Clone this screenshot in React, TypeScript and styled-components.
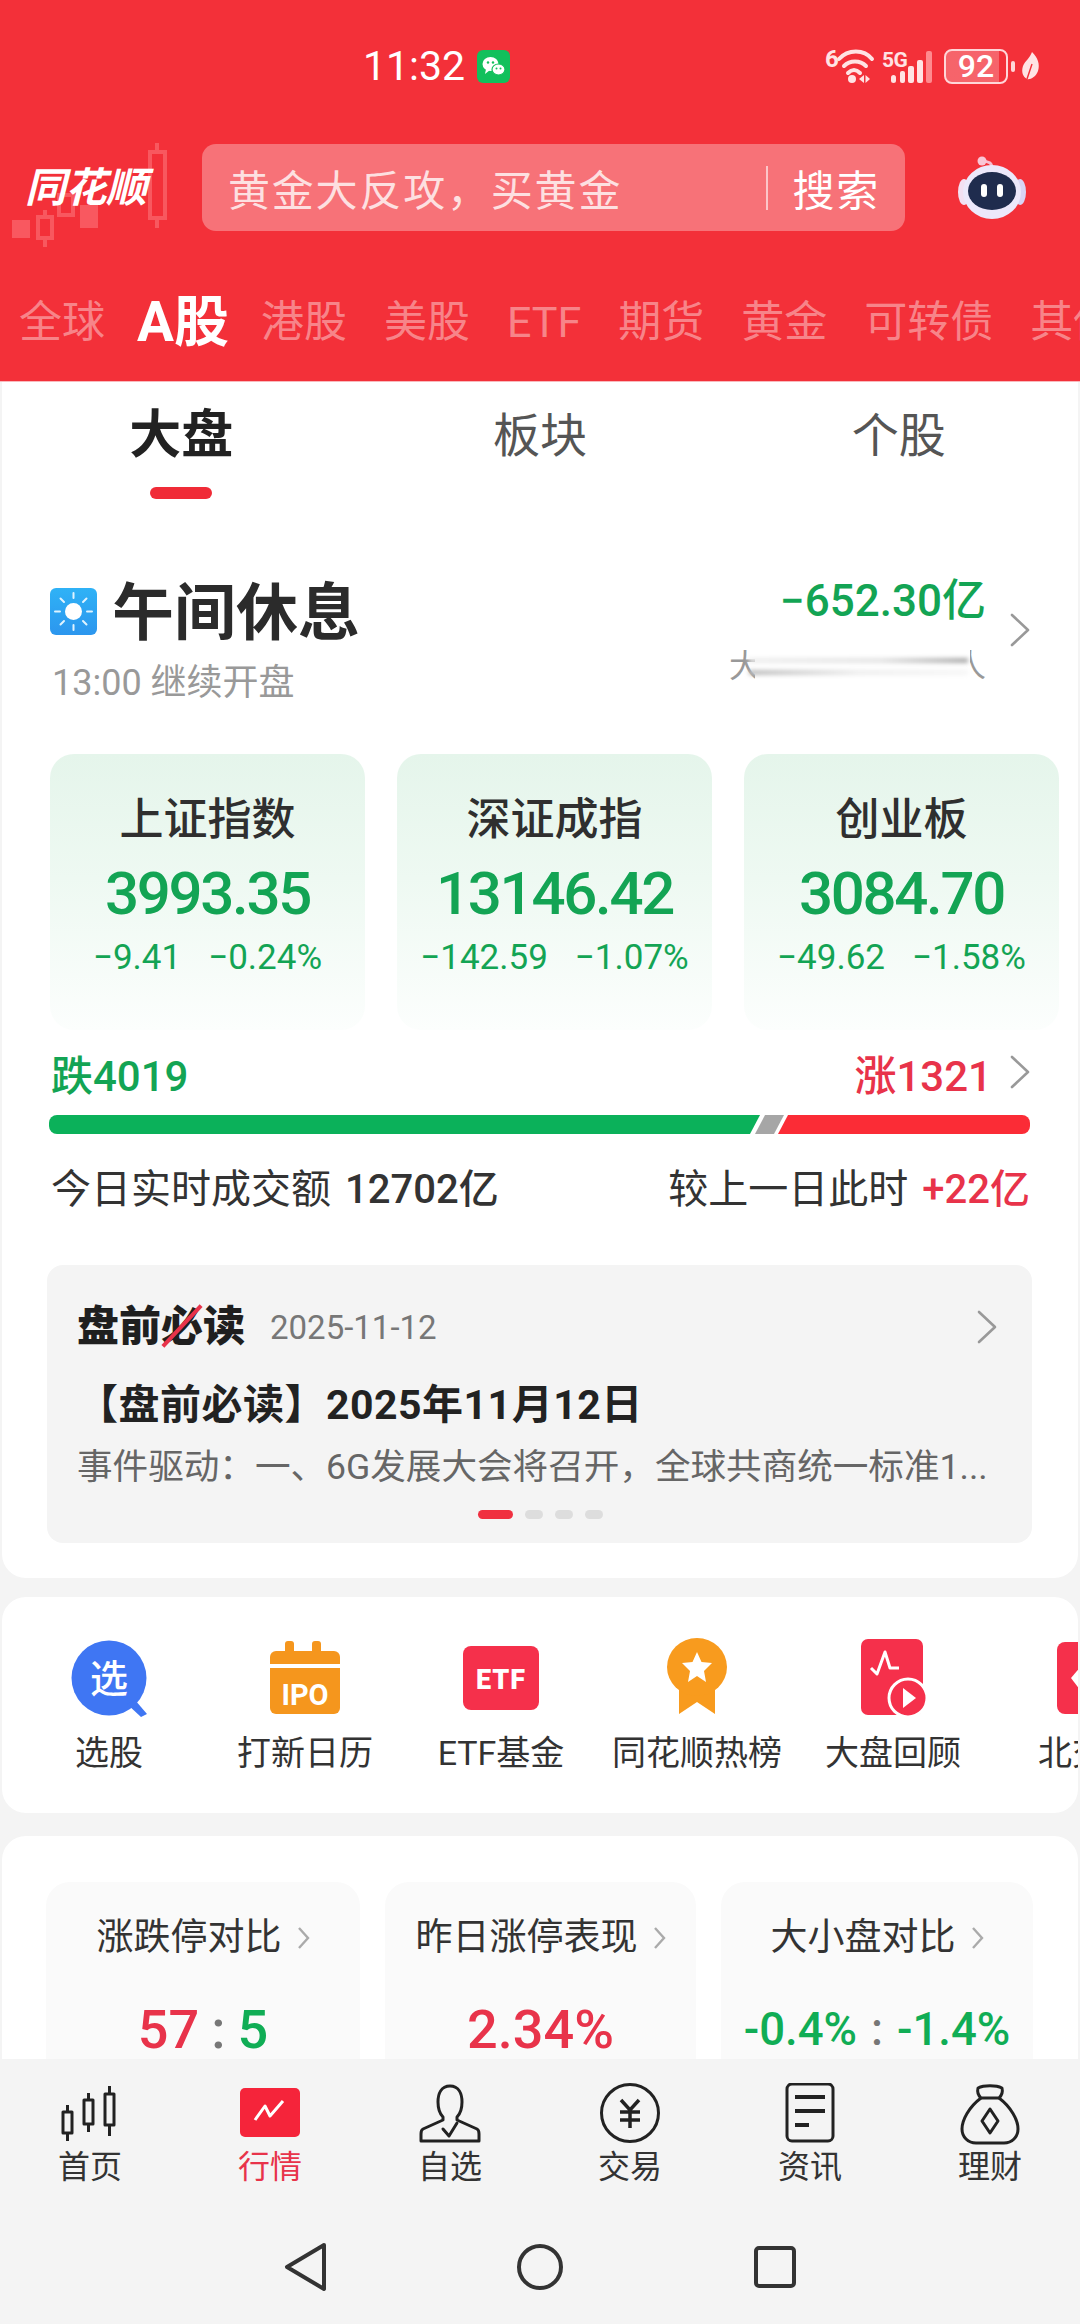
import React from "react";
import styled, { createGlobalStyle } from "styled-components";

const Global = createGlobalStyle`
  html, body { margin: 0; padding: 0; background: #f4f4f4; }
  * { box-sizing: border-box; }
  body { font-family: Roboto, "Noto Sans CJK SC", sans-serif; }
`;

const GREEN = "#13a454";
const RED = "#e8334a";

const Page = styled.div`
  width: 1080px; height: 2324px; display: flex; flex-direction: column; overflow: hidden; background: #f4f4f4;
`;
const Header = styled.header`
  height: 382px; background: #f33039; flex: none; display: flex; flex-direction: column; border-bottom: 1px solid #f9b9bd;
`;
const StatusBar = styled.div`
  margin-top: 46px; height: 40px; padding: 0 40px 0 363px; display: flex; align-items: center; justify-content: space-between; color: #fff;
`;
const TimeGroup = styled.div`display: flex; align-items: center; gap: 9px;`;
const Time = styled.span`font-size: 41px; line-height: 40px; width: 105px; white-space: nowrap;`;
const StatusIcons = styled.div`display: flex; align-items: center;`;
const Battery = styled.div`
  width: 64px; height: 35px; margin-left: 10px; border: 2.5px solid #ffd6d8; border-radius: 8px; color: #fff;
  font-size: 32px; font-weight: 500; line-height: 30px; text-align: center;
  background: linear-gradient(90deg, rgba(255,255,255,.25) 88%, transparent 88%);
`;
const BatteryNub = styled.i`display: block; width: 4px; height: 11px; margin: 0 6px 0 3px; background: #ffd6d8; border-radius: 2px;`;

const SearchRow = styled.div`
  margin-top: 58px; height: 87px; display: flex; align-items: center; padding-left: 202px; position: relative;
`;
const LogoMark = styled.svg`position: absolute; left: 8px; top: -4px;`;
const LogoText = styled.span`
  position: absolute; left: 25px; top: 19px; font-size: 41px; line-height: 50px; font-weight: 700; font-style: italic; color: #fff; letter-spacing: -.5px; white-space: nowrap;
`;
const SearchBox = styled.div`
  width: 703px; height: 87px; border-radius: 14px; background: rgba(255,255,255,.32); display: flex; align-items: center; padding: 0 25px 0 26px; color: #fff;
  font-size: 42px; letter-spacing: 1.8px;
`;
const Hint = styled.span`flex: 1; color: rgba(255,255,255,.78); white-space: nowrap;`;
const SearchDivider = styled.i`display: block; width: 2px; height: 44px; background: rgba(255,255,255,.6); margin-right: 24px;`;
const Robot = styled.svg`margin-left: 53px; flex: none;`;

const MarketTabs = styled.nav`
  margin-top: 61px; height: 60px; padding-left: 19px; display: flex; align-items: center; gap: 37px; overflow: hidden; white-space: nowrap;
`;
const MarketTab = styled.span<{ $on?: boolean }>`
  flex: none; font-size: ${p => (p.$on ? "55px" : "43px")}; font-weight: ${p => (p.$on ? 700 : 400)}; color: ${p => (p.$on ? "#fff" : "rgba(255,255,255,.42)")}; line-height: 60px;
  margin: ${p => (p.$on ? "0 -5px" : "0")};
`;

const Body = styled.main`flex: 1; min-height: 0; overflow: hidden;`;
const Section = styled.section<{ $first?: boolean }>`
  background: #fff; margin: 0 2px; border-radius: ${p => (p.$first ? "0 0 24px 24px" : "24px")};
`;
const Overview = styled(Section)`padding-bottom: 35px;`;
const SubTabs = styled.div`display: grid; grid-template-columns: repeat(3, 1fr); height: 128px;`;
const SubTab = styled.div<{ $on?: boolean }>`
  display: flex; flex-direction: column; align-items: center; padding-top: 24px;
  font-size: ${p => (p.$on ? "52px" : "47px")}; font-weight: ${p => (p.$on ? 700 : 400)}; line-height: 60px; color: ${p => (p.$on ? "#222" : "#555")};
`;
const SubLine = styled.i`display: block; width: 62px; height: 12px; border-radius: 6px; background: #f02b37; margin-top: 21px;`;

const MarketRow = styled.div`margin-top: 59px; padding: 0 48px; display: flex; justify-content: space-between;`;
const TitleLine = styled.div`display: flex; align-items: center; gap: 15px; height: 84px;`;
const SunBadge = styled.svg`flex: none;`;
const BreakTitle = styled.h1`margin: 0; position: relative; top: 3px; font-size: 62px; line-height: 84px; font-weight: 700; color: #2b2b2b;`;
const BreakSub = styled.div`margin: 10px 0 0 2px; font-size: 36px; line-height: 40px; color: #999;`;
const FlowWrap = styled.div`display: flex; align-items: flex-start;`;
const FlowCol = styled.div`display: flex; flex-direction: column; align-items: flex-end; padding-top: 7px;`;
const FlowValue = styled.div`font-size: 44px; line-height: 50px; font-weight: 500; color: ${GREEN}; white-space: nowrap;`;
const Smear = styled.div`
  position: relative; width: 257px; height: 33px; margin-top: 24px; display: flex; justify-content: space-between; align-items: center; color: #999; font-size: 32px; line-height: 33px;
`;
const SmearMask = styled.i`position: absolute; left: 26px; right: 16px; top: 0; bottom: 0; background: #fff;`;
const SmearLine = styled.i<{ $low?: boolean }>`
  position: absolute; left: 20px; right: 18px; top: ${p => (p.$low ? "20px" : "8px")}; height: 5px; filter: blur(2px);
  background: ${p => (p.$low
    ? "linear-gradient(90deg,#bbb,#eee 50%,#f6f6f6)"
    : "linear-gradient(90deg,#eee,#e4e4e4 60%,#aaa)")};
`;
const Chevron = styled.svg<{ $top?: number; $gap?: number }>`flex: none; margin-left: ${p => p.$gap ?? 24}px; margin-top: ${p => p.$top ?? 0}px;`;

const IndexGrid = styled.div`display: grid; grid-template-columns: repeat(3, 315px); column-gap: 32px; padding-left: 48px; margin-top: 51px;`;
const IndexCard = styled.div`
  height: 276px; border-radius: 24px; padding-top: 42px; display: flex; flex-direction: column; align-items: center;
  background: linear-gradient(180deg, #e5f5eb 0%, #eef9f2 45%, #fcfefd 100%);
`;
const IndexName = styled.div`font-size: 44px; line-height: 48px; font-weight: 500; color: #2f2f2f;`;
const IndexValue = styled.div`margin-top: 15px; font-size: 60px; line-height: 70px; font-weight: 500; letter-spacing: -2.3px; color: ${GREEN};`;
const IndexDelta = styled.div`margin-top: 9px; display: flex; gap: 27px; font-size: 35px; line-height: 40px; color: ${GREEN}; white-space: nowrap;`;

const BreadthRow = styled.div`margin-top: 18px; padding: 0 48px 0 49px; display: flex; align-items: center; height: 48px; font-size: 42px; font-weight: 500;`;
const Fall = styled.span`color: ${GREEN}; flex: 1;`;
const Rise = styled.span`color: ${RED};`;
const Bar = styled.div`margin: 19px 48px 0 47px; height: 19px; display: flex;`;
const BarGreen = styled.i`
  display: block; width: 711px; border-radius: 8px 0 0 8px; background: #0bb15a;
  clip-path: polygon(0 0, 100% 0, calc(100% - 10px) 100%, 0 100%);
`;
const BarGrey = styled.i`
  display: block; width: 29px; margin-left: -5px; background: #a6a6a6;
  clip-path: polygon(10px 0, 100% 0, calc(100% - 10px) 100%, 0 100%);
`;
const BarRed = styled.i`
  display: block; flex: 1; margin-left: -6px; border-radius: 0 8px 8px 0; background: #fb2c36;
  clip-path: polygon(10px 0, 100% 0, 100% 100%, 0 100%);
`;
const VolumeRow = styled.div`margin-top: 31px; padding: 0 48px 0 49px; display: flex; justify-content: space-between; font-size: 40px; line-height: 50px; color: #333; white-space: nowrap;`;
const VolValue = styled.b<{ $red?: boolean }>`font-weight: 500; margin-left: 14px; color: ${p => (p.$red ? RED : "#333")};`;

const BriefCard = styled.div`margin: 50px 46px 0 45px; height: 278px; border-radius: 16px; background: #f4f4f4; padding: 37px 35px 0 30px;`;
const BriefHead = styled.div`display: flex; align-items: center; height: 50px;`;
const BriefBrand = styled.div`position: relative; font-size: 42px; line-height: 50px; font-weight: 900; color: #1f1f1f;`;
const BriefSlash = styled.i`position: absolute; left: 103px; top: -4px; width: 4px; height: 56px; background: ${RED}; transform: rotate(43deg); display: block;`;
const BriefDate = styled.span`margin-left: 25px; flex: 1; font-size: 33px; color: #777;`;
const BriefTitle = styled.div`margin-top: 28px; font-size: 41px; line-height: 50px; font-weight: 700; letter-spacing: .5px; color: #222; white-space: nowrap;`;
const BriefDesc = styled.div`margin-top: 15px; font-size: 35.6px; line-height: 44px; color: #666; white-space: nowrap;`;
const Dots = styled.div`margin-top: 21px; display: flex; justify-content: center; gap: 12px; padding-left: 6px;`;
const Dot = styled.i<{ $on?: boolean }>`display: block; height: 9px; width: ${p => (p.$on ? "35px" : "18px")}; border-radius: 5px; background: ${p => (p.$on ? "#f03040" : "#ddd")};`;

const ToolSection = styled(Section)`margin-top: 19px; height: 216px; padding: 41px 0 0 9px; display: flex; overflow: hidden; border-radius: 24px;`;
const Tool = styled.div`flex: none; width: 196px; display: flex; flex-direction: column; align-items: center;`;
const ToolIcon = styled.svg`display: block; flex: none;`;
const ToolLabel = styled.div`margin-top: 13px; font-size: 34px; line-height: 44px; color: #333; white-space: nowrap;`;

const StatSection = styled(Section)`margin-top: 23px; padding: 46px 46px 0 44px; height: 400px; display: grid; grid-template-columns: 314px 311px 312px; column-gap: 25px;`;
const StatCard = styled.div`background: #fafafa; border-radius: 24px; padding-top: 32px; display: flex; flex-direction: column; align-items: center;`;
const StatName = styled.div`display: flex; align-items: center; font-size: 37px; line-height: 48px; color: #333; white-space: nowrap;`;
const StatChevron = styled.svg`margin-left: 15px;`;
const StatValue = styled.div<{ $small?: boolean }>`
  margin-top: 33px; display: flex; align-items: center; gap: ${p => (p.$small ? "14px" : "12px")}; font-size: ${p => (p.$small ? "45.5px" : "54px")}; line-height: 70px; font-weight: 500; white-space: nowrap;
`;
const Tone = styled.span<{ $c: "r" | "g" | "m" }>`color: ${p => (p.$c === "r" ? RED : p.$c === "g" ? "#10ad55" : "#777")};`;

const BottomNav = styled.footer`flex: none; height: 265px; background: #f4f4f4; padding-top: 24px;`;
const NavTabs = styled.div`display: grid; grid-template-columns: repeat(6, 180px);`;
const NavTab = styled.div<{ $on?: boolean }>`display: flex; flex-direction: column; align-items: center; color: ${p => (p.$on ? RED : "#333")}; font-size: 32px; line-height: 40px;`;
const NavLabel = styled.span`margin-top: 2px;`;
const SysButtons = styled.div`margin-top: 34px; height: 92px; display: flex; justify-content: center; align-items: center; gap: 185px;`;

const Chev = ({ top, gap }: { top?: number; gap?: number }) => (
  <Chevron $top={top} $gap={gap} width={20} height={34} viewBox="0 0 20 34" fill="none" stroke="#999" strokeWidth="2.6" strokeLinecap="round" strokeLinejoin="round">
    <path d="M2 2 L18 17 L2 32" />
  </Chevron>
);

const SmallChev = () => (
  <StatChevron width="13" height="24" viewBox="0 0 13 24" fill="none" stroke="#aaa" strokeWidth="2.400">
    <path d="M2 2 L11 12 L2 22" />
  </StatChevron>
);

const indices = [
  { n: "上证指数", v: "3993.35", a: "−9.41", b: "−0.24%" },
  { n: "深证成指", v: "13146.42", a: "−142.59", b: "−1.07%" },
  { n: "创业板", v: "3084.70", a: "−49.62", b: "−1.58%" },
];

const App = () => (
  <Page>
    <Global />
    <Header>
      <StatusBar>
        <TimeGroup>
          <Time>11:32</Time>
          <svg width="33" height="33" viewBox="0 0 33 33">
            <rect width="33" height="33" rx="6" fill="#12c05c" />
            <ellipse cx="13.5" cy="14" rx="8" ry="7" fill="#fff" />
            <path d="M9 19 L8 24 L13 20Z" fill="#fff" />
            <ellipse cx="21.5" cy="19.5" rx="6.5" ry="5.5" fill="#fff" stroke="#12c05c" strokeWidth="1.2" />
            <circle cx="11" cy="12.5" r="1.2" fill="#12c05c" />
            <circle cx="16" cy="12.5" r="1.2" fill="#12c05c" />
            <circle cx="19.5" cy="18.5" r="1" fill="#12c05c" />
            <circle cx="23.5" cy="18.5" r="1" fill="#12c05c" />
          </svg>
        </TimeGroup>
        <StatusIcons>
          <svg width="110" height="38" viewBox="0 0 110 38" fill="none">
            <text x="1" y="20" fontSize="24" fontWeight="700" fontFamily="Roboto, sans-serif" fill="#ffe3e4">6</text>
            <g stroke="#ffe3e4" strokeWidth="4" strokeLinecap="round">
              <path d="M15 12 C24 2 40 2 48 12" />
              <path d="M20 19 C26 13 36 13 42 19" />
              <path d="M24 26 C28 22 32 22 36 26" />
            </g>
            <circle cx="28" cy="32" r="4" fill="#ffe3e4" />
            <path d="M35 32 L40 28 V36Z M41.500 28 L46 32 L41.500 36Z" fill="#ffe3e4" />
            <text x="58" y="20" fontSize="21" fontWeight="700" letterSpacing="-.5" fontFamily="Roboto, sans-serif" fill="#ffe3e4">5G</text>
            <g fill="#ffe3e4">
              <rect x="67" y="28" width="5" height="8" rx="2.500" />
              <rect x="76" y="24" width="5" height="12" rx="2" />
              <rect x="84" y="19" width="6" height="17" rx="2" />
              <rect x="93" y="13" width="6" height="23" rx="2" />
            </g>
            <rect x="102" y="4" width="6" height="32" rx="2" fill="#ff8a8e" />
          </svg>
          <Battery>92</Battery>
          <BatteryNub />
          <svg width="19" height="28" viewBox="0 0 19 28">
            <path d="M11 0 C17 6 19 12 17 19 C15 25 9 28 6 27 C2 25 0 20 2 14 C4 9 9 6 11 0Z" fill="#ffe3e4" />
            <path d="M6 27 L11 12" stroke="#f33039" strokeWidth="1.400" />
          </svg>
        </StatusIcons>
      </StatusBar>
      <SearchRow>
        <LogoMark width="165" height="110" viewBox="8 140 165 110" fill="none">
          <g stroke="#fb6a70" strokeWidth="4" opacity=".7">
            <rect x="150" y="152" width="15" height="66" />
            <path d="M157 143 V152 M157 218 V228" />
            <rect x="59" y="195" width="14" height="20" />
            <rect x="38" y="217" width="14" height="21" />
            <path d="M45 210 V217 M45 238 V247" />
          </g>
          <rect x="80" y="205" width="18" height="23" fill="#fb6a70" opacity=".7" />
          <rect x="12" y="220" width="18" height="18" fill="#fb6a70" opacity=".7" />
        </LogoMark>
        <LogoText>同花顺</LogoText>
        <SearchBox>
          <Hint>黄金大反攻，买黄金</Hint>
          <SearchDivider />
          <span>搜索</span>
        </SearchBox>
        <Robot width="68" height="64" viewBox="0 0 68 64">
          <path d="M34 12 C34 6 30 6 26 5" stroke="#f7bcd0" strokeWidth="3" fill="none" />
          <circle cx="24" cy="5" r="4.500" fill="#f9c6d6" />
          <ellipse cx="6" cy="36" rx="6" ry="13" fill="#f3e0f2" />
          <ellipse cx="62" cy="36" rx="6" ry="13" fill="#d9d4f5" />
          <ellipse cx="34" cy="36" rx="29" ry="27" fill="#ece8fb" />
          <ellipse cx="34" cy="35" rx="24" ry="19" fill="#1f2c4e" />
          <rect x="23" y="28" width="6" height="13" rx="3" fill="#fff" />
          <rect x="39" y="28" width="6" height="13" rx="3" fill="#fff" />
        </Robot>
      </SearchRow>
      <MarketTabs>
        <MarketTab>全球</MarketTab>
        <MarketTab $on>A股</MarketTab>
        <MarketTab>港股</MarketTab>
        <MarketTab>美股</MarketTab>
        <MarketTab>ETF</MarketTab>
        <MarketTab>期货</MarketTab>
        <MarketTab>黄金</MarketTab>
        <MarketTab>可转债</MarketTab>
        <MarketTab>其他</MarketTab>
      </MarketTabs>
    </Header>

    <Body>
      <Overview $first>
        <SubTabs>
          <SubTab $on>大盘<SubLine /></SubTab>
          <SubTab>板块</SubTab>
          <SubTab>个股</SubTab>
        </SubTabs>
        <MarketRow>
          <div>
            <TitleLine>
              <SunBadge width="47" height="47" viewBox="0 0 47 47">
                <defs>
                  <linearGradient id="sky" x1="0" y1="0" x2="0" y2="1">
                    <stop offset="0" stopColor="#2fb2f6" />
                    <stop offset="1" stopColor="#2c96ee" />
                  </linearGradient>
                </defs>
                <rect width="47" height="47" rx="6" fill="url(#sky)" />
                <circle cx="23.500" cy="23.500" r="8.500" fill="#fff" />
                <g stroke="#dff3ff" strokeWidth="2" strokeLinecap="round">
                  <path d="M23.500 5 V10 M23.500 37 V42 M5 23.500 H10 M37 23.500 H42 M10.500 10.500 L14 14 M33 33 L36.500 36.500 M36.500 10.500 L33 14 M14 33 L10.500 36.500" />
                </g>
              </SunBadge>
              <BreakTitle>午间休息</BreakTitle>
            </TitleLine>
            <BreakSub>13:00 继续开盘</BreakSub>
          </div>
          <FlowWrap>
            <FlowCol>
              <FlowValue>−652.30亿</FlowValue>
              <Smear>
                <span>大</span>
                <span>人</span>
                <SmearMask />
                <SmearLine />
                <SmearLine $low />
              </Smear>
            </FlowCol>
            <Chev top={44} />
          </FlowWrap>
        </MarketRow>

        <IndexGrid>
          {indices.map(i => (
            <IndexCard key={i.n}>
              <IndexName>{i.n}</IndexName>
              <IndexValue>{i.v}</IndexValue>
              <IndexDelta>
                <span>{i.a}</span>
                <span>{i.b}</span>
              </IndexDelta>
            </IndexCard>
          ))}
        </IndexGrid>

        <BreadthRow>
          <Fall>跌4019</Fall>
          <Rise>涨1321</Rise>
          <Chev gap={18} />
        </BreadthRow>
        <Bar>
          <BarGreen />
          <BarGrey />
          <BarRed />
        </Bar>
        <VolumeRow>
          <span>今日实时成交额<VolValue>12702亿</VolValue></span>
          <span>较上一日此时<VolValue $red>+22亿</VolValue></span>
        </VolumeRow>

        <BriefCard>
          <BriefHead>
            <BriefBrand>盘前必读<BriefSlash /></BriefBrand>
            <BriefDate>2025-11-12</BriefDate>
            <Chev />
          </BriefHead>
          <BriefTitle>【盘前必读】2025年11月12日</BriefTitle>
          <BriefDesc>事件驱动：一、6G发展大会将召开，全球共商统一标准1...</BriefDesc>
          <Dots>
            <Dot $on />
            <Dot />
            <Dot />
            <Dot />
          </Dots>
        </BriefCard>
      </Overview>

      <ToolSection>
        <Tool>
          <ToolIcon width="80" height="80" viewBox="0 0 80 80">
            <circle cx="40" cy="40" r="37.500" fill="#3f76f3" />
            <path d="M58 66 L66 62 L78 76 L72 79Z" fill="#3f76f3" />
            <text x="40" y="54" textAnchor="middle" fontSize="38" fontWeight="500" fill="#fff" fontFamily="'Noto Sans CJK SC', sans-serif">选</text>
          </ToolIcon>
          <ToolLabel>选股</ToolLabel>
        </Tool>
        <Tool>
          <ToolIcon width="80" height="80" viewBox="0 0 80 80">
            <rect x="20" y="3" width="9" height="14" rx="3" fill="#f5961d" />
            <rect x="47" y="3" width="9" height="14" rx="3" fill="#f5961d" />
            <path d="M5 19 a6 6 0 0 1 6 -6 H69 a6 6 0 0 1 6 6 V26 H5Z" fill="#f5961d" />
            <path d="M5 30 H75 V70 a6 6 0 0 1 -6 6 H11 a6 6 0 0 1 -6 -6Z" fill="#f5961d" />
            <text x="40" y="67" textAnchor="middle" fontSize="29" fontWeight="700" fill="#fff" fontFamily="Roboto, sans-serif">IPO</text>
          </ToolIcon>
          <ToolLabel>打新日历</ToolLabel>
        </Tool>
        <Tool>
          <ToolIcon width="80" height="80" viewBox="0 0 80 80">
            <rect x="2" y="8" width="76" height="64" rx="8" fill="#f5304b" />
            <text x="40" y="51" textAnchor="middle" fontSize="27" fontWeight="900" letterSpacing="1" fill="#fff" fontFamily="Roboto, sans-serif">ETF</text>
          </ToolIcon>
          <ToolLabel>ETF基金</ToolLabel>
        </Tool>
        <Tool>
          <ToolIcon width="80" height="80" viewBox="0 0 80 80">
            <path d="M22 50 H58 V76 L40 64 L22 76Z" fill="#f89b1e" />
            <ellipse cx="40" cy="29" rx="30" ry="29" fill="#f89b1e" />
            <path d="M40 14 L44.500 24 L55 25 L47 33 L49 44 L40 38 L31 44 L33 33 L25 25 L35.500 24Z" fill="#fff" />
          </ToolIcon>
          <ToolLabel>同花顺热榜</ToolLabel>
        </Tool>
        <Tool>
          <ToolIcon width="80" height="80" viewBox="0 0 80 80" fill="none">
            <rect x="8" y="1" width="62" height="76" rx="7" fill="#f5304b" />
            <path d="M18 30 L24 36 L32 14 L37 30 H46" stroke="#fff" strokeWidth="3" strokeLinejoin="round" />
            <circle cx="55" cy="60" r="19" fill="#f5304b" stroke="#fff" strokeWidth="3" />
            <path d="M50 50 L63 60 L50 70Z" fill="#fff" />
          </ToolIcon>
          <ToolLabel>大盘回顾</ToolLabel>
        </Tool>
        <Tool>
          <ToolIcon width="80" height="80" viewBox="0 0 80 80">
            <rect x="8" y="4" width="74" height="72" rx="8" fill="#f5304b" />
            <path d="M22 40 L34 26 L46 40 L34 56Z" fill="#fff" />
          </ToolIcon>
          <ToolLabel>北交所</ToolLabel>
        </Tool>
      </ToolSection>

      <StatSection>
        <StatCard>
          <StatName>涨跌停对比<SmallChev /></StatName>
          <StatValue>
            <Tone $c="r">57</Tone>
            <Tone $c="m">:</Tone>
            <Tone $c="g">5</Tone>
          </StatValue>
        </StatCard>
        <StatCard>
          <StatName>昨日涨停表现<SmallChev /></StatName>
          <StatValue><Tone $c="r">2.34%</Tone></StatValue>
        </StatCard>
        <StatCard>
          <StatName>大小盘对比<SmallChev /></StatName>
          <StatValue $small>
            <Tone $c="g">-0.4%</Tone>
            <Tone $c="m">:</Tone>
            <Tone $c="g">-1.4%</Tone>
          </StatValue>
        </StatCard>
      </StatSection>
    </Body>

    <BottomNav>
      <NavTabs>
        <NavTab>
          <svg width="62" height="62" viewBox="0 0 62 62" fill="none" stroke="#222" strokeWidth="3" strokeLinejoin="round">
            <rect x="4" y="29" width="9" height="21" />
            <path d="M8.500 22 V29 M8.500 50 V58" />
            <rect x="25" y="17" width="9" height="24" />
            <path d="M29.500 10 V17 M29.500 41 V49" />
            <rect x="46" y="11" width="9" height="31" />
            <path d="M50.500 3 V11 M50.500 42 V53" />
          </svg>
          <NavLabel>首页</NavLabel>
        </NavTab>
        <NavTab $on>
          <svg width="62" height="62" viewBox="0 0 62 62" fill="none">
            <rect x="1" y="5" width="60" height="49" rx="5" fill="#f5243a" />
            <path d="M16 37 L26 23 L31 33 L44 18" stroke="#fff" strokeWidth="3" strokeLinejoin="round" />
          </svg>
          <NavLabel>行情</NavLabel>
        </NavTab>
        <NavTab>
          <svg width="62" height="62" viewBox="0 0 62 62" fill="none" stroke="#222" strokeWidth="3" strokeLinejoin="round" strokeLinecap="round">
            <path d="M31 3 C22 3 19 11 19 19 C19 26 21 31 24 34 V37 L4 46 C2 47 2 49 2 51 V58 H60 V51 C60 49 60 47 58 46 L38 37 V34 C41 31 43 26 43 19 C43 11 40 3 31 3Z" />
            <path d="M24 46 L30 53 L38 40" />
          </svg>
          <NavLabel>自选</NavLabel>
        </NavTab>
        <NavTab>
          <svg width="62" height="62" viewBox="0 0 62 62" fill="none" stroke="#222" strokeWidth="3">
            <circle cx="31" cy="30" r="28.500" />
            <path d="M22 17 L31 27 L40 17 M21 29 H41 M21 37 H41 M31 27 V45" strokeWidth="3.500" />
          </svg>
          <NavLabel>交易</NavLabel>
        </NavTab>
        <NavTab>
          <svg width="62" height="62" viewBox="0 0 62 62" fill="none" stroke="#222" strokeWidth="3">
            <rect x="8" y="1" width="46" height="57" rx="5" />
            <path d="M16 14 H46 M16 28 H46 M16 42 H30" strokeWidth="4" />
          </svg>
          <NavLabel>资讯</NavLabel>
        </NavTab>
        <NavTab>
          <svg width="62" height="62" viewBox="0 0 62 62" fill="none" stroke="#222" strokeWidth="3" strokeLinejoin="round">
            <path d="M19 5 C25 2 37 2 43 5 C44 9 42 13 40 15 H22 C20 13 18 9 19 5Z" />
            <path d="M22 15 C10 24 3 37 3 46 C3 54 9 60 17 60 H45 C53 60 59 54 59 46 C59 37 52 24 40 15" />
            <path d="M31 26 L39 38 L31 50 L23 38Z" />
          </svg>
          <NavLabel>理财</NavLabel>
        </NavTab>
      </NavTabs>
      <SysButtons>
        <svg width="50" height="50" viewBox="0 0 50 50" fill="none" stroke="#333" strokeWidth="4" strokeLinejoin="round">
          <path d="M44 3 L7 25 L44 47Z" />
        </svg>
        <svg width="50" height="50" viewBox="0 0 50 50" fill="none" stroke="#333" strokeWidth="4">
          <circle cx="25" cy="25" r="21" />
        </svg>
        <svg width="50" height="50" viewBox="0 0 50 50" fill="none" stroke="#333" strokeWidth="4">
          <rect x="6" y="6" width="38" height="38" rx="3" />
        </svg>
      </SysButtons>
    </BottomNav>
  </Page>
);

export default App;
